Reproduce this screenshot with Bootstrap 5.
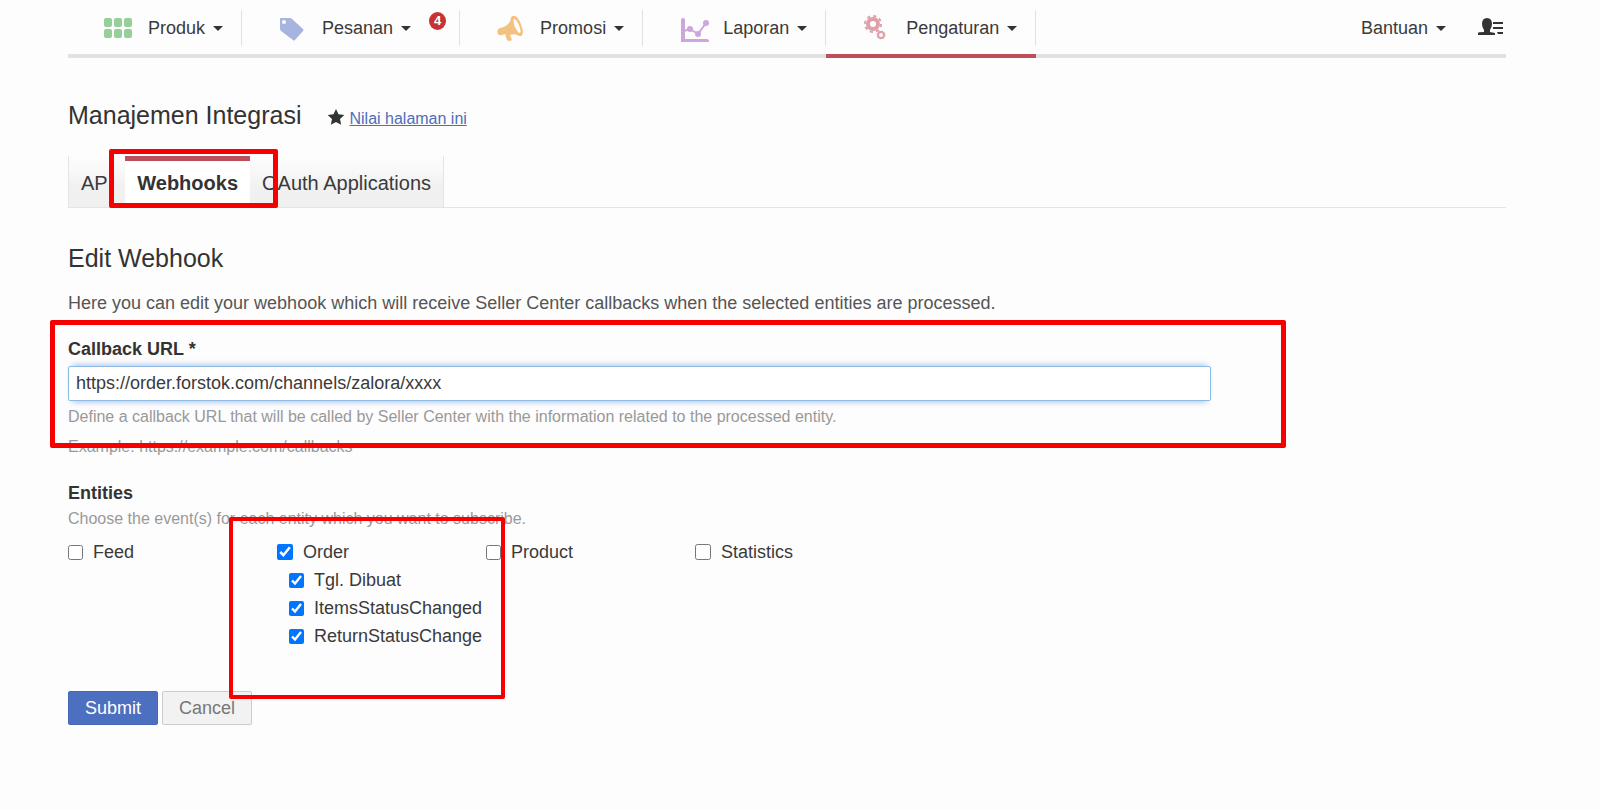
<!DOCTYPE html>
<html lang="id">
<head>
<meta charset="utf-8">
<meta name="viewport" content="width=device-width, initial-scale=1">
<title>Manajemen Integrasi</title>
<link href="https://cdn.jsdelivr.net/npm/bootstrap@5.3.0/dist/css/bootstrap.min.css" rel="stylesheet">
<style>
  body { font-family: "Liberation Sans", Arial, sans-serif; font-size: 18px; line-height: 24px; color: #3a3a3a; background: #fdfdfd; }
  .page { padding: 0 94px 40px 68px; }
  h1, h2 { font-size: 25px; line-height: 32px; font-weight: 400; color: #333; margin: 0; }
  .title-row { margin-top: 41px; }
  main { margin-top: 34px; }

  /* main menu */
  .main-menu { box-shadow: inset 0 -4px #e1e1e1; }
  .main-menu li { padding: 10px 0 8px; border-bottom: 4px solid transparent; }
  .main-menu li.current { border-color: #bf4e5b; }
  .menu-link { display: flex; align-items: center; height: 36px; padding: 0 18px 0 36px; border: 0; border-right: 1px solid #e1e1e1; background: none; color: #3a3a3a; }
  .menu-link svg { margin-right: 14px; }
  .menu-link::after, .help-link::after { content: ""; margin-left: 8px; border: 5px solid transparent; border-top-color: #333; border-bottom: 0; }
  .help-link { display: flex; align-items: center; height: 36px; padding: 0; border: 0; background: none; color: #3a3a3a; }
  .account { margin: 0 3px 0 32px; }
  .has-count { padding-right: 48px; }
  .count { position: absolute; top: 12px; right: 14px; width: 17px; height: 18px; border-radius: 50%; background: #c53433; color: #fff; font-size: 13px; line-height: 18px; font-weight: 700; text-align: center; }

  .rate { margin-left: 26px; font-size: 16px; color: #4f6dba; }
  .rate svg { vertical-align: -2px; }
  .rate:hover { color: #36529c; }

  /* tabs */
  .tab-bar { margin-top: 25px; border-bottom: 1px solid #e4e4e4; }
  .tab-bar a { display: block; height: 51px; padding: 15px 12px 0; font-size: 20px; color: #3a3a3a; text-decoration: none; background: linear-gradient(#fdfdfd, #f8f8f8 30%, #f1f1f1 60%, #f0f0f0); }
  .tab-bar li:first-child a { border-left: 1px solid #e4e4e4; }
  .tab-bar li:last-child a { border-right: 1px solid #e4e4e4; }
  .tab-bar a.current { padding-top: 10px; border-top: 5px solid #b9505c; font-weight: 700; color: #333; background: #fff; }

  /* red markers over the parts of the form to fill in */
  .marker { position: absolute; border: 5px solid #f70000; border-radius: 2px; pointer-events: none; z-index: 2; }
  .marker-tab { inset: -7px -28px -1px -16px; }
  .marker-url { inset: -17px -75px 11px -18px; }
  .marker-order { inset: -21px -19px -49px -48px; border-width: 4px; }

  .intro { margin: 17px 0 22px; color: #555; }
  .field { width: 79.5%; }
  .field-label { display: block; font-size: 18px; line-height: 24px; font-weight: 700; color: #333; }
  .url-box { height: 35px; margin-top: 5px; padding: 0 7px; font-size: 18px; color: #3a3a3a; background: #fff; border: 1px solid #8cbbe5; border-radius: 2px; box-shadow: 0 -5px 6px -4px #a9bfe8, 0 5px 6px -4px #a9bfe8; }
  .url-box:focus { border-color: #6da9df; box-shadow: 0 0 8px #8aa8e0; }
  .hint { font-size: 16px; color: #999; margin: 0; }
  .first-hint { margin-bottom: 6px; }
  .entity-group { margin-top: 22px; }
  .entity-group legend { margin-bottom: 2px; }
  .entities { margin-top: 7px; }
  .entity { width: 209px; }
  .tick-row { display: flex; align-items: center; height: 28px; gap: 10px; white-space: nowrap; }
  .tick-row input { width: 15px; height: 15px; margin: 0; }
  .tick-row .big-tick { width: 16px; height: 16px; }
  .sub-rows { padding-left: 12px; }

  .actions { margin-top: 41px; }
  .actions button { height: 34px; padding: 0 16px; line-height: 30px; border-radius: 2px; font-size: 18px; }
  .actions .go { background: #4c6fc0; border-color: #4568b8; color: #fff; }
  .actions .stop { background: #f2f2f2; border-color: #ccc; color: #777; }
</style>
</head>
<body>
<div class="page">
  <nav class="main-menu d-flex justify-content-between">
    <ul class="list-unstyled d-flex mb-0">
      <li><button type="button" class="menu-link">
        <svg width="30" height="28" viewBox="0 0 30 28" fill="#97cf9b"><rect x="0" y="4" width="8" height="9" rx="2"/><rect x="10" y="4" width="8" height="9" rx="2"/><rect x="20" y="4" width="8" height="9" rx="2"/><rect x="0" y="15" width="8" height="9" rx="2"/><rect x="10" y="15" width="8" height="9" rx="2"/><rect x="20" y="15" width="8" height="9" rx="2"/></svg>Produk</button></li>
      <li class="position-relative"><button type="button" class="menu-link has-count">
        <svg width="30" height="28" viewBox="0 0 30 28"><path fill="#a6b5df" fill-rule="evenodd" d="M3 4h8q2 0 3 1l11 10q1 1 0 2l-8 9q-1 1-2 0L3 17q-1-1-1-2V5q0-1 1-1zM6 6a2 2 0 1 0 0 4a2 2 0 1 0 0-4z"/></svg>Pesanan</button><span class="count">4</span></li>
      <li><button type="button" class="menu-link">
        <svg width="30" height="28" viewBox="0 0 30 28" fill="#f4c27f"><path d="M16 2Q14 12 4 14Q0 16 2 20Q3 22 6 21L9 20L11 26Q13 28 16 26L14 21Q19 19 24 22Z"/><path stroke="#f4c27f" stroke-width="2" d="M17 3C22 1 28 19 25 21C20 22 13 5 17 3z"/><path fill="#fdfdfd" d="M18 5C21 5 26 16 24 19C21 19 16 8 18 5z"/></svg>Promosi</button></li>
      <li><button type="button" class="menu-link">
        <svg width="30" height="28" viewBox="0 0 30 28" fill="none" stroke="#cda6dd" stroke-linecap="round"><path stroke-width="4" stroke-linejoin="round" d="M4 6V27H28"/><path stroke-width="2" d="M5 17L11 15L19 20L27 9"/><g fill="#cda6dd" stroke="none"><circle cx="11" cy="15" r="3"/><circle cx="19" cy="20" r="3"/><circle cx="27" cy="9" r="3"/></g></svg>Laporan</button></li>
      <li class="current"><button type="button" class="menu-link">
        <svg width="30" height="28" viewBox="0 0 30 28" fill="none" stroke="#dfa0aa"><circle cx="11" cy="10" r="5" stroke-width="4"/><circle cx="11" cy="10" r="8" stroke-width="2" stroke-dasharray="3.2 3.08"/><circle cx="19" cy="21" r="3" stroke-width="2"/><circle cx="19" cy="21" r="4" stroke-width="1" stroke-dasharray="1.6 1.54"/></svg>Pengaturan</button></li>
    </ul>
    <ul class="list-unstyled d-flex mb-0">
      <li><button type="button" class="help-link">Bantuan</button></li>
      <li><button type="button" class="account d-flex border-0 bg-transparent p-0" aria-label="Akun">
        <svg width="25" height="34" viewBox="0 0 25 34" fill="#333"><path d="M9 8q5 0 5 6q0 3-2 6v2l5 1v2H0v-2q0-1 6-1v-2q-2-3-2-6q0-6 5-6z"/><path d="M15 12h10v2H15zM15 17h10v2H15zM19 22h6v2H20z"/></svg></button></li>
    </ul>
  </nav>

  <header class="title-row d-flex align-items-baseline">
    <h1>Manajemen Integrasi</h1>
    <a href="#" class="rate text-decoration-none"><svg class="me-1" width="18" height="18" viewBox="0 0 18 18"><path fill="#333" d="M9 1l2.500 5.300 5.800.7-4.300 4 1.100 5.800L9 14l-5.100 2.800L5 11 .7 7l5.800-.7z"/></svg><span class="text-decoration-underline">Nilai halaman ini</span></a>
  </header>

  <ul class="tab-bar list-unstyled d-flex mb-0">
    <li><a href="#">API</a></li>
    <li class="position-relative"><a href="#" class="current">Webhooks</a><span class="marker marker-tab"></span></li>
    <li><a href="#">OAuth Applications</a></li>
  </ul>

  <main>
    <h2>Edit Webhook</h2>
    <p class="intro">Here you can edit your webhook which will receive Seller Center callbacks when the selected entities are processed.</p>
    <form>
      <div class="field position-relative">
        <label class="field-label" for="callback">Callback URL *</label>
        <input class="url-box form-control" id="callback" type="text" value="https://order.forstok.com/channels/zalora/xxxx">
        <p class="hint first-hint pt-1">Define a callback URL that will be called by Seller Center with the information related to the processed entity.</p>
        <p class="hint">Example: https://example.com/callbacks</p>
        <span class="marker marker-url"></span>
      </div>

      <fieldset class="entity-group">
        <legend class="field-label">Entities</legend>
        <p class="hint">Choose the event(s) for each entity which you want to subscribe.</p>
        <div class="entities d-flex">
          <div class="entity"><label class="tick-row"><input type="checkbox">Feed</label></div>
          <div class="entity position-relative">
            <label class="tick-row"><input class="big-tick" type="checkbox" checked>Order</label>
            <div class="sub-rows">
              <label class="tick-row"><input type="checkbox" checked>Tgl. Dibuat</label>
              <label class="tick-row"><input type="checkbox" checked>ItemsStatusChanged</label>
              <label class="tick-row"><input type="checkbox" checked>ReturnStatusChange</label>
            </div>
            <span class="marker marker-order"></span>
          </div>
          <div class="entity"><label class="tick-row"><input type="checkbox">Product</label></div>
          <div class="entity"><label class="tick-row"><input class="big-tick" type="checkbox">Statistics</label></div>
        </div>
      </fieldset>

      <div class="actions d-flex gap-1">
        <button type="submit" class="btn go">Submit</button>
        <button type="button" class="btn stop">Cancel</button>
      </div>
    </form>
  </main>
</div>
<script src="https://cdn.jsdelivr.net/npm/bootstrap@5.3.0/dist/js/bootstrap.bundle.min.js"></script>
</body>
</html>
